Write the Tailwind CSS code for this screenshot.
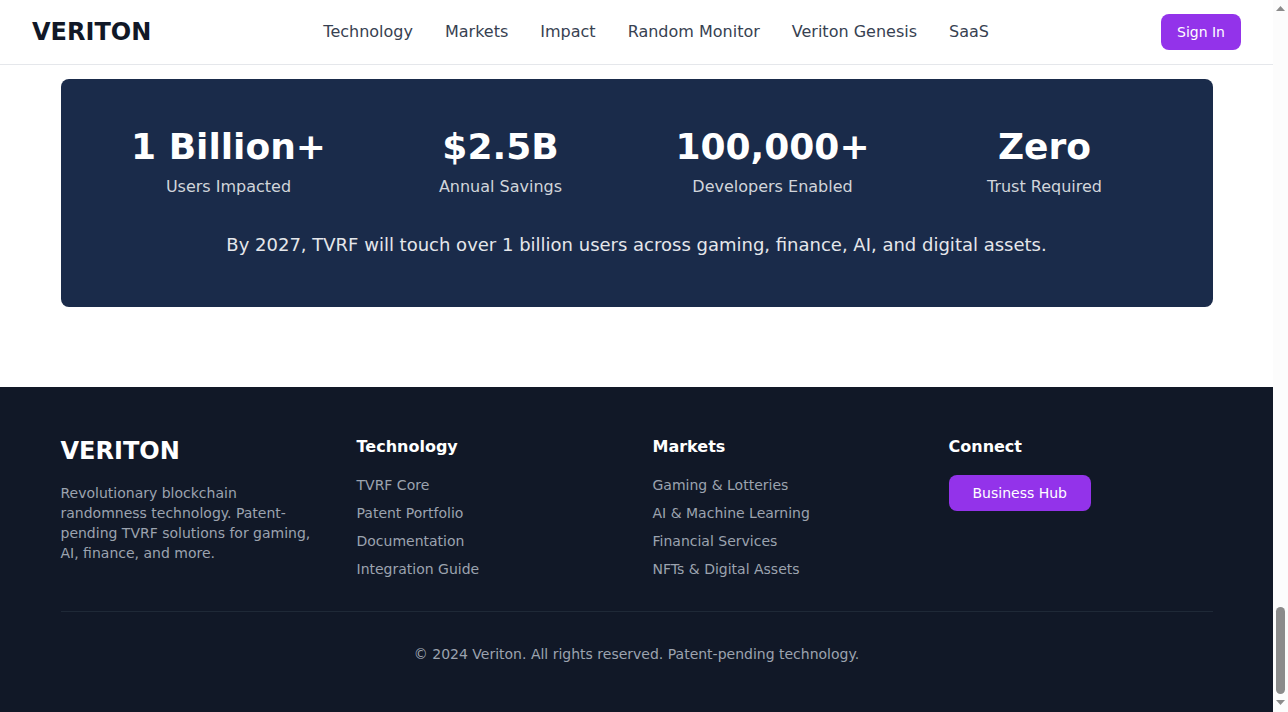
<!DOCTYPE html>
<html lang="en">
<head>
<meta charset="utf-8">
<meta name="viewport" content="width=device-width, initial-scale=1">
<title>Veriton</title>
<script src="https://cdn.jsdelivr.net/npm/@tailwindcss/browser@4"></script>
</head>
<body class="flex min-h-screen bg-white font-['DejaVu_Sans',sans-serif]">
<div class="flex min-w-0 flex-1 flex-col">
  <header class="border-b border-[#e5e7eb] bg-white">
    <div class="flex h-16 items-center justify-between px-8">
      <a href="#" class="text-2xl font-bold text-[#111827]">VERITON</a>
      <nav class="flex gap-8 text-base text-[#374151]">
        <a href="#technology">Technology</a>
        <a href="#markets">Markets</a>
        <a href="#impact">Impact</a>
        <a href="#monitor">Random Monitor</a>
        <a href="#genesis">Veriton Genesis</a>
        <a href="#saas">SaaS</a>
      </nav>
      <button type="button" class="h-9 rounded-lg bg-[#9333ea] px-4 text-sm text-white">Sign In</button>
    </div>
  </header>

  <main class="pt-3.5 pb-20">
    <section class="mx-auto max-w-6xl rounded-lg bg-[#1a2b4a] p-12 text-center">
      <div class="grid grid-cols-4 gap-8">
        <div>
          <div class="mb-2 text-4xl font-bold text-white">1 Billion+</div>
          <div class="text-base text-[#d1d5db]">Users Impacted</div>
        </div>
        <div>
          <div class="mb-2 text-4xl font-bold text-white">$2.5B</div>
          <div class="text-base text-[#d1d5db]">Annual Savings</div>
        </div>
        <div>
          <div class="mb-2 text-4xl font-bold text-white">100,000+</div>
          <div class="text-base text-[#d1d5db]">Developers Enabled</div>
        </div>
        <div>
          <div class="mb-2 text-4xl font-bold text-white">Zero</div>
          <div class="text-base text-[#d1d5db]">Trust Required</div>
        </div>
      </div>
      <p class="mt-8 text-lg text-[#e5e7eb]">By 2027, TVRF will touch over 1 billion users across gaming, finance, AI, and digital assets.</p>
    </section>
  </main>

  <footer class="flex-1 bg-[#111827] py-12">
    <div class="mx-auto max-w-6xl">
      <div class="grid grid-cols-4 gap-8">
        <div>
          <div class="mb-4 text-2xl font-bold text-white">VERITON</div>
          <p class="text-sm text-[#9ca3af]">Revolutionary blockchain randomness technology. Patent-pending TVRF solutions for gaming, AI, finance, and more.</p>
        </div>
        <div>
          <h3 class="mb-4 text-base font-bold text-white">Technology</h3>
          <ul class="flex flex-col gap-2 text-sm text-[#9ca3af]">
            <li><a class="block" href="#core">TVRF Core</a></li>
            <li><a class="block" href="#patents">Patent Portfolio</a></li>
            <li><a class="block" href="#docs">Documentation</a></li>
            <li><a class="block" href="#guide">Integration Guide</a></li>
          </ul>
        </div>
        <div>
          <h3 class="mb-4 text-base font-bold text-white">Markets</h3>
          <ul class="flex flex-col gap-2 text-sm text-[#9ca3af]">
            <li><a class="block" href="#gaming">Gaming &amp; Lotteries</a></li>
            <li><a class="block" href="#ai">AI &amp; Machine Learning</a></li>
            <li><a class="block" href="#finance">Financial Services</a></li>
            <li><a class="block" href="#nfts">NFTs &amp; Digital Assets</a></li>
          </ul>
        </div>
        <div>
          <h3 class="mb-4 text-base font-bold text-white">Connect</h3>
          <button type="button" class="block h-9 rounded-lg bg-[#9333ea] px-6 text-sm text-white">Business Hub</button>
        </div>
      </div>
      <div class="mt-8 border-t border-[#1f2937] pt-8 text-center text-sm text-[#9ca3af]">© 2024 Veriton. All rights reserved. Patent-pending technology.</div>
    </div>
  </footer>
</div>

<!-- Scroll track -->
<div class="flex w-[15px] shrink-0 flex-col items-center bg-[#fcfcfc] pt-1.5 pb-[7px]" aria-hidden="true">
  <svg class="h-[5px] w-[9px]" viewBox="0 0 9 5" fill="#8b8b8b"><path d="M4.5 0 9 5H0z"/></svg>
  <div class="mt-auto mb-1.5 h-[87px] w-[9px] rounded-full bg-[#8b8b8b]"></div>
  <svg class="h-[5px] w-[9px]" viewBox="0 0 9 5" fill="#8b8b8b"><path d="M0 0h9L4.5 5z"/></svg>
</div>
</body>
</html>
